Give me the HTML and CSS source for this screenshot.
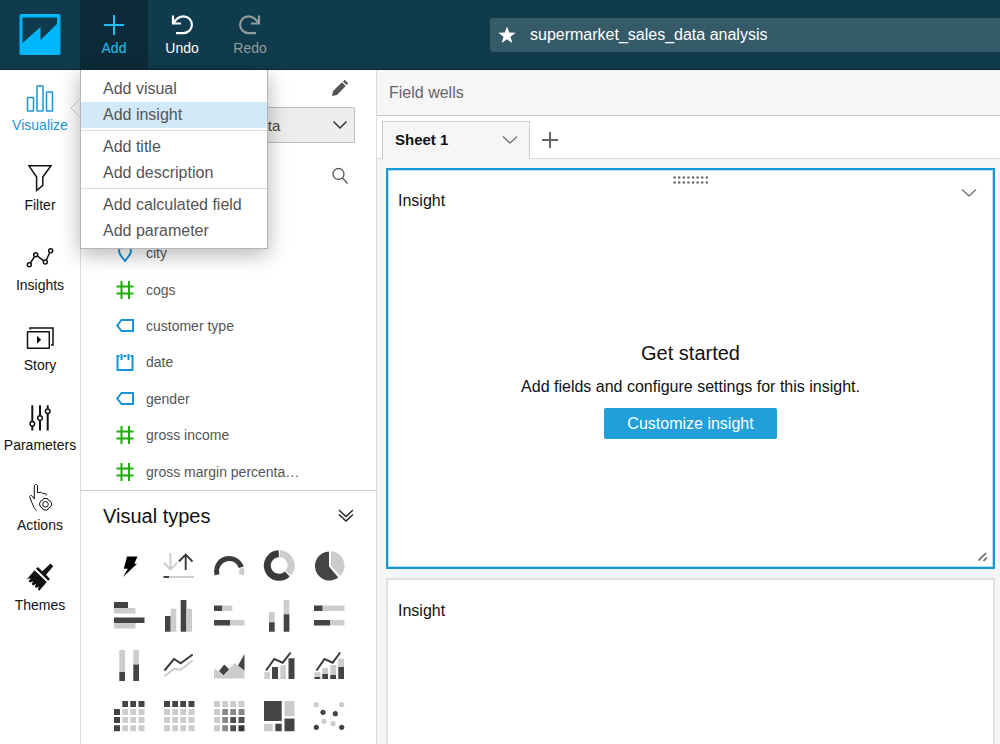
FILE: index.html
```html
<!DOCTYPE html>
<html lang="en">
<head>
  <meta charset="UTF-8">
  <meta name="viewport" content="width=device-width, initial-scale=1">
  <title>supermarket_sales_data analysis</title>
  <link rel="stylesheet" href="styles.css">
</head>
<body>
  <header class="topbar">
    <a class="logo" href="#" aria-label="Home">
      <svg width="42" height="42" viewBox="0 0 42 42"><rect x="0.500" y="0" width="41" height="41" rx="1.500" fill="#00b7fb"/><path d="M3.500 3.500H38V10L21.500 26V13L3.500 29Z" fill="#103b4c"/></svg>
    </a>
    <div class="tools">
      <button class="tool active" type="button">
        <svg width="28" height="28" viewBox="0 0 28 28" fill="none" stroke="currentColor" stroke-width="2"><path d="M14 4v20M4 14h20"/></svg>
        Add
      </button>
      <button class="tool" type="button">
        <svg width="28" height="28" viewBox="0 0 28 28" fill="none" stroke="currentColor" stroke-width="2.200"><path d="M5 4.500v8h8M5.500 12C8 8 11 5.300 15.500 5.300a8.400 8.400 0 0 1 0 16.800H8"/></svg>
        Undo
      </button>
      <button class="tool" type="button" disabled>
        <svg width="28" height="28" viewBox="0 0 28 28" fill="none" stroke="currentColor" stroke-width="2.200"><path d="M23 4.500v8h-8M22.500 12C20 8 17 5.300 12.500 5.300a8.400 8.400 0 0 0 0 16.800H20"/></svg>
        Redo
      </button>
    </div>
    <div class="analysis-name">
      <svg width="18" height="18" viewBox="0 0 18 18"><path d="M9 .5l2.200 6.100 6.400.2-5.100 3.900 1.800 6.300L9 13.300 3.700 17l1.800-6.300L.4 6.800l6.400-.2z" fill="#fff"/></svg>
      <span>supermarket_sales_data analysis</span>
    </div>

    <div class="menu">
      <button type="button">Add visual</button>
      <button type="button" class="selected">Add insight</button>
      <hr>
      <button type="button">Add title</button>
      <button type="button">Add description</button>
      <hr>
      <button type="button">Add calculated field</button>
      <button type="button">Add parameter</button>
    </div>
  </header>

  <div class="layout">
    <nav class="sidenav">
      <a href="#" class="active">
        <svg viewBox="0 0 32 32" fill="none" stroke="currentColor" stroke-width="1.500"><rect x="3.500" y="15.500" width="6" height="13.500" rx=".5"/><rect x="13" y="4" width="6" height="25" rx=".5"/><rect x="22.500" y="10" width="6" height="19" rx=".5"/></svg>
        Visualize
        <svg class="notch" viewBox="0 0 10 20"><path d="M10 1L1 10l9 9" fill="#fff" stroke="#ccc"/></svg>
      </a>
      <a href="#">
        <svg viewBox="0 0 32 32" fill="none" stroke="currentColor" stroke-width="1.500"><path d="M5 3.800h22L18.800 15v8.300L12.600 28.500V15Z"/></svg>
        Filter
      </a>
      <a href="#">
        <svg viewBox="0 0 32 32" fill="none" stroke="currentColor" stroke-width="1.500"><circle cx="5.300" cy="22.700" r="2"/><circle cx="11.700" cy="12.700" r="2"/><circle cx="21.300" cy="20" r="2"/><circle cx="26.700" cy="8.700" r="2"/><path d="M6.400 21l4.200-6.600M13.300 13.900l6.400 4.900M22.200 18.200l3.600-7.700"/></svg>
        Insights
      </a>
      <a href="#">
        <svg viewBox="0 0 32 32" fill="none" stroke="currentColor" stroke-width="1.500"><rect x="3.500" y="9.700" width="21.800" height="16.500" rx=".5"/><path d="M6 7.500V6h23v17h-2"/><path d="M13 13.700l4.200 4-4.200 4z" fill="currentColor" stroke="none"/></svg>
        Story
      </a>
      <a href="#">
        <svg viewBox="0 0 32 32" fill="none" stroke="currentColor" stroke-width="2"><path d="M8.300 3.300v16M8.300 24v4.500M16 3.300v10.500M16 18.500v10M23.700 3.300v3.500M23.700 11.500v17"/><g stroke-width="1.500"><circle cx="8.300" cy="21.700" r="2.300"/><circle cx="16" cy="16" r="2.300"/><circle cx="23.700" cy="9.300" r="2.300"/></g></svg>
        Parameters
      </a>
      <a href="#">
        <svg viewBox="0 0 32 32" fill="none" stroke="currentColor" stroke-width="1"><path d="M12.500 28.500L10 25.500 5.800 15.500c-.5-1.800 1.500-2.800 2.600-1.300L10.300 17V4c0-2 3.200-2 3.200 0v6.500l4-.2 1 1.200 3.200.2.800 1.700"/><path d="M19.500 16.500h4l.8 1.700 2.200 1 1.300 2.800-1.300 3-2.200 1.200-.8 1.800h-4l-.8-1.800-2.200-1.200-1-3 1-2.800 2.200-1z"/><circle cx="21.500" cy="22.300" r="2.800"/></svg>
        Actions
      </a>
      <a href="#">
        <svg viewBox="0 0 32 32" fill="currentColor"><path d="M26.500 1.500l2.700 2.800-7.200 8.400 4 4.300-1.800 1.800L12 6.800 13.800 5l4.500 4.200z"/><path d="M10.500 8.300L22.800 20 15.300 28.700l-1.500-1.500 1.200-2.700-2.800 1.600-1.400-1.400 1.300-2.800-3.100 1.500-1.300-1.400 1.600-2.800-3.300 1.300-1.300-1.300 2.200-3.200-4 1.200z"/></svg>
        Themes
      </a>
    </nav>

    <aside class="panel">
      <div class="dataset">
        <button class="icon-btn" type="button" aria-label="Edit data set">
          <svg width="18" height="18" viewBox="0 0 18 18" fill="#555"><path d="M1 17l1-5L11 3.300l3.700 3.700-8.700 9zM12 2.500L13.700.8l3.500 3.500L15.500 6z"/></svg>
        </button>
        <div class="select-wrap">
          <select aria-label="Data set">
            <option>supermarket_sales_data</option>
          </select>
          <svg class="chevron" width="16" height="10" viewBox="0 0 16 10" fill="none" stroke="#333" stroke-width="1.500"><path d="M1.500 1.500L8 8l6.500-6.500"/></svg>
        </div>
        <button class="icon-btn" type="button" aria-label="Search fields">
          <svg width="18" height="18" viewBox="0 0 18 18" fill="none" stroke="#555" stroke-width="1.300"><circle cx="7.500" cy="7" r="5.500"/><path d="M11.500 11l5 5.500"/></svg>
        </button>
      </div>

      <ul class="fields">
        <li>
          <svg viewBox="0 0 18 18" class="dim"><path d="M9 17C7 13.500 3 11 3 7a6 6 0 0 1 12 0c0 4-4 6.500-6 10z"/></svg>
          city
        </li>
        <li>
          <svg viewBox="0 0 18 18" class="measure"><path d="M5.500 0v18M13 0v18M.5 5.500h17M.5 12.500h17"/></svg>
          cogs
        </li>
        <li>
          <svg viewBox="0 0 18 18" class="dim"><path d="M5.500 3H17v11H5.500L1.200 8.500z"/></svg>
          customer type
        </li>
        <li>
          <svg viewBox="0 0 18 18" class="dim"><path d="M3.500 3h-2v14h15V3h-2M7.500 3h3M5.500 1v6M12.500 1v6"/></svg>
          date
        </li>
        <li>
          <svg viewBox="0 0 18 18" class="dim"><path d="M5.500 3H17v11H5.500L1.200 8.500z"/></svg>
          gender
        </li>
        <li>
          <svg viewBox="0 0 18 18" class="measure"><path d="M5.500 0v18M13 0v18M.5 5.500h17M.5 12.500h17"/></svg>
          gross income
        </li>
        <li>
          <svg viewBox="0 0 18 18" class="measure"><path d="M5.500 0v18M13 0v18M.5 5.500h17M.5 12.500h17"/></svg>
          gross margin percenta…
        </li>
      </ul>

      <section class="visuals">
        <div class="visuals-head">
          <h2>Visual types</h2>
          <button class="icon-btn" type="button" aria-label="Collapse">
            <svg width="16" height="14" viewBox="0 0 16 14" fill="none" stroke="#222" stroke-width="1.400"><path d="M1 1l7 6.500L15 1M1 5.500L8 12l7-6.500"/></svg>
          </button>
        </div>
        <div class="visual-grid">
          <button type="button" aria-label="AutoGraph"><svg viewBox="0 0 32 32"><path d="M14 6.500h10.500L21.300 13.700H24L10 27l4.800-8.300h-4z" fill="#000"/></svg></button>
          <button type="button" aria-label="KPI"><svg viewBox="0 0 32 32" fill="none" stroke-width="1.900"><path class="sl" d="M7.500 3v16M.7 12.500l6.800 6.800 6.800-6.800"/><path class="sd" d="M22.700 20V4.500M15.900 11.500l6.800-6.800 6.800 6.800"/><path class="sl" d="M6 27h25"/><path class="sd" d="M.5 27H6"/></svg></button>
          <button type="button" aria-label="Gauge"><svg viewBox="0 0 32 32" fill="none" stroke-width="5"><path class="sd" d="M4.200 24.800A12.500 12.500 0 0 1 28.300 17.300"/><path class="sl" d="M28.600 18.300a12.500 12.500 0 0 1-.2 6.400"/></svg></button>
          <button type="button" aria-label="Donut chart"><svg viewBox="0 0 32 32" fill="none" stroke-width="7"><path class="sl" d="M16.800 3.700A11.800 11.800 0 0 1 25.200 23.200"/><path class="sd" d="M24.300 24A11.800 11.800 0 1 1 15.800 3.700"/></svg></button>
          <button type="button" aria-label="Pie chart"><svg viewBox="0 0 32 32"><path class="d" d="M16 1.500V16.500l9.300 11A14.500 14.500 0 1 1 16 1.500z"/><path class="l" d="M17.800 1.300A14.500 14.500 0 0 1 27.200 26L17.800 15.500z"/></svg></button>

          <button type="button" aria-label="Horizontal bar chart"><svg viewBox="0 0 32 32"><path class="d" d="M1 2h14v6H1zM1 17.500h30.500V23H1z"/><path class="l" d="M1 8h21.500v5.500H1zM1 23h21.500v5.500H1z"/></svg></button>
          <button type="button" aria-label="Vertical bar chart"><svg viewBox="0 0 32 32"><path class="d" d="M2 16h5.700v15.700H2zM17.700 0h5.700v31.700h-5.700z"/><path class="l" d="M7.700 8.700h5.600v23H7.700zM23.400 8.700H29v23h-5.600z"/></svg></button>
          <button type="button" aria-label="Horizontal stacked bar chart"><svg viewBox="0 0 32 32"><path class="d" d="M1 5.500h8.300V11H1zM1 20h16v5.500H1z"/><path class="l" d="M9.300 5.500h10V11h-10zM17 20h14.500v5.500H17z"/></svg></button>
          <button type="button" aria-label="Vertical stacked bar chart"><svg viewBox="0 0 32 32"><path class="l" d="M6 12h5.700v10.300H6zM20.700 0h5.700v14.300h-5.700z"/><path class="d" d="M6 22.300h5.700v9.400H6zM20.700 14.300h5.700v17.400h-5.700z"/></svg></button>
          <button type="button" aria-label="Horizontal stacked 100% bar chart"><svg viewBox="0 0 32 32"><path class="d" d="M1 5.500h8.700V11H1zM1 20h16v5.500H1z"/><path class="l" d="M9.700 5.500h21.800V11H9.700zM17 20h14.500v5.500H17z"/></svg></button>

          <button type="button" aria-label="Vertical stacked 100% bar chart"><svg viewBox="0 0 32 32"><path class="l" d="M6.300 0H12v22H6.300zM20.300 0H26v14.500h-5.700z"/><path class="d" d="M6.300 22H12v9H6.300zM20.300 14.500H26V31h-5.700z"/></svg></button>
          <button type="button" aria-label="Line chart"><svg viewBox="0 0 32 32" fill="none" stroke-width="2"><path class="sd" d="M1.500 20.500L11 9l6.700 4.300 12-8.800"/><path class="sl" d="M1.500 26.300l9.500-7.600 6.700 1 12-9.200"/></svg></button>
          <button type="button" aria-label="Area line chart"><svg viewBox="0 0 32 32"><path class="l" d="M1 18.700l5 2.800 4.500 4L21.500 13l10 7.500v8H1z"/><path class="d" d="M6 21l5.200-6.500 5 4.800-5.700 6zM25 15.500L31.500 4v16.500z"/></svg></button>
          <button type="button" aria-label="Clustered bar combo chart"><svg viewBox="0 0 32 32"><path class="l" d="M1.300 22.300H7V29H1.300zM17.300 15.300H23V29h-5.700z"/><path class="d" d="M9 17h6v12H9zM25.500 8.300h6V29h-6z"/><path class="sd" d="M3 20.500L11.300 9l8.400 3.700 8-10.200" fill="none" stroke-width="2"/></svg></button>
          <button type="button" aria-label="Stacked bar combo chart"><svg viewBox="0 0 32 32"><path class="l" d="M1.500 22.300h5.800V29H1.500zM9.300 18H15v11H9.300zM17.300 15H23v14h-5.700zM25.300 8.700H31V29h-5.700z"/><path class="d" d="M1.500 27h5.800v2H1.500zM9.300 24H15v5H9.300zM17.300 25H23v4h-5.700zM25.300 17H31v12h-5.700z"/><path class="sd" d="M3.500 20.500L11.500 9l8.200 3.700 7.500-10.200" fill="none" stroke-width="2"/></svg></button>

          <button type="button" aria-label="Pivot table"><svg viewBox="0 0 32 32"><path class="d" d="M9.300 1H15v6H9.300zM17.300 1H23v6h-5.700zM25.500 1h6v6h-6zM1 9h6v6H1zM1 17h6v6H1zM1 25.300h6v6H1z"/><path class="l" d="M9.300 9H15v6H9.300zM17.300 9H23v6h-5.700zM25.500 9h6v6h-6zM9.300 17H15v6H9.300zM17.300 17H23v6h-5.700zM25.500 17h6v6h-6zM9.300 25.300H15v6H9.300zM17.300 25.300H23v6h-5.700zM25.500 25.300h6v6h-6z"/></svg></button>
          <button type="button" aria-label="Table"><svg viewBox="0 0 32 32"><path class="d" d="M1 1h6v6H1zM9.300 1H15v6H9.300zM17.300 1H23v6h-5.700zM25.500 1h6v6h-6z"/><path class="l" d="M1 9h6v6H1zM1 17h6v6H1zM1 25.300h6v6H1zM9.300 9H15v6H9.300zM17.300 9H23v6h-5.700zM25.500 9h6v6h-6zM9.300 17H15v6H9.300zM17.300 17H23v6h-5.700zM25.500 17h6v6h-6zM9.300 25.300H15v6H9.300zM17.300 25.300H23v6h-5.700zM25.500 25.300h6v6h-6z"/></svg></button>
          <button type="button" aria-label="Heat map"><svg viewBox="0 0 32 32"><path class="l" d="M1 1h6v6H1zM9.300 1H15v6H9.300zM17.300 1H23v6h-5.700zM25.500 1h6v6h-6zM1 9h6v6H1zM1 17h6v6H1zM1 25.300h6v6H1z"/><path fill="#888" d="M9.300 9H15v6H9.300zM17.300 9H23v6h-5.700zM25.500 9h6v6h-6zM9.300 17H15v6H9.300zM9.300 25.300H15v6H9.300z"/><path fill="#505050" d="M17.300 17H23v6h-5.700zM25.500 17h6v6h-6zM17.300 25.300H23v6h-5.700z"/><path fill="#333" d="M25.500 25.300h6v6h-6z"/></svg></button>
          <button type="button" aria-label="Tree map"><svg viewBox="0 0 32 32"><path class="d" d="M1 1h17.700v20H1zM12.300 23.700h6.400v7.600h-6.400zM21.500 18.500h10v12.800h-10z"/><path class="l" d="M21.500 1h10v15.300h-10zM1 23.700h8.700v7.600H1z"/></svg></button>
          <button type="button" aria-label="Scatter plot"><svg viewBox="0 0 32 32"><g class="l"><circle cx="3.300" cy="4.700" r="2.600"/><circle cx="28.700" cy="4.700" r="2.600"/><circle cx="11" cy="21.300" r="2.600"/><circle cx="20" cy="23.700" r="2.600"/></g><g class="d"><circle cx="10" cy="12.300" r="2.600"/><circle cx="22.300" cy="13.700" r="2.600"/><circle cx="3.300" cy="27.300" r="2.600"/><circle cx="28.700" cy="27.300" r="2.600"/></g></svg></button>
        </div>
      </section>
    </aside>

    <main class="workspace">
      <div class="wells">Field wells</div>
      <div class="tabs">
        <button class="tab" type="button">
          Sheet 1
          <svg width="16" height="10" viewBox="0 0 16 10" fill="none" stroke="#777" stroke-width="1.400"><path d="M1 1.500l7 6.500 7-6.500"/></svg>
        </button>
        <button class="add-tab" type="button" aria-label="Add sheet">
          <svg width="16" height="16" viewBox="0 0 16 16" fill="none" stroke="#666" stroke-width="2"><path d="M8 0v16M0 8h16"/></svg>
        </button>
      </div>
      <div class="canvas">
        <section class="card selected">
          <svg class="handle" width="36" height="8" viewBox="0 0 36 8" stroke="#555" stroke-width="2" stroke-dasharray="2.200 2.400"><path d="M.5 1.500h35M.5 6.500h35"/></svg>
          <div class="card-head">
            <h3>Insight</h3>
            <button class="icon-btn" type="button" aria-label="Insight options">
              <svg width="16" height="10" viewBox="0 0 16 10" fill="none" stroke="#777" stroke-width="1.400"><path d="M1 1.500l7 6.500 7-6.500"/></svg>
            </button>
          </div>
          <div class="card-body">
            <h2>Get started</h2>
            <p>Add fields and configure settings for this insight.</p>
            <button class="primary" type="button">Customize insight</button>
          </div>
          <svg class="resize" width="12" height="12" viewBox="0 0 12 12" stroke="#666" stroke-width="1.700"><path d="M1.500 9.500L9 2M6.500 10L10 6.500"/></svg>
        </section>
        <section class="card">
          <div class="card-head">
            <h3>Insight</h3>
          </div>
        </section>
      </div>
    </main>
  </div>
</body>
</html>
```

FILE: styles.css
```css
* {
  box-sizing: border-box;
}
body {
  margin: 0;
  height: 100vh;
  display: flex;
  flex-direction: column;
  overflow: hidden;
  font-family: "Liberation Sans", Arial, sans-serif;
  font-size: 16px;
  color: #111;
  background: #fff;
}
h2, h3, p, ul {
  margin: 0;
  padding: 0;
  font-weight: normal;
}
button {
  font-family: inherit;
  border: none;
  background: none;
  padding: 0;
  cursor: pointer;
}
svg {
  display: block;
  flex: none;
}

/* top bar */
.topbar {
  position: relative;
  z-index: 2;
  flex: none;
  height: 70px;
  display: flex;
  align-items: center;
  background: #103b4c;
  border-bottom: 1px solid #08293a;
}
.logo {
  width: 80px;
  display: flex;
  justify-content: center;
}
.tools {
  flex: 1;
  align-self: stretch;
  display: flex;
}
.tool {
  width: 68px;
  display: flex;
  flex-direction: column;
  align-items: center;
  padding-top: 11px;
  font-size: 14px;
  line-height: 18px;
  color: #fff;
}
.tool.active {
  background: #0c2b39;
  color: #1cc0f5;
}
.tool:disabled {
  color: #949b9f;
}
.analysis-name {
  width: 51%;
  height: 34px;
  display: flex;
  align-items: center;
  gap: 14px;
  padding-left: 8px;
  color: #fff;
  background: #355a68;
  border-radius: 3px 0 0 3px;
}

/* add menu */
.menu {
  position: absolute;
  top: 70px;
  left: 80px;
  width: 188px;
  padding: 6px 0 4px;
  background: #fff;
  border: 1px solid #b5b5b5;
  border-top: none;
  box-shadow: 0 5px 20px rgba(0, 0, 0, 0.3);
}
.menu button {
  display: block;
  width: 100%;
  padding-left: 22px;
  font-size: 16px;
  line-height: 26px;
  text-align: left;
  color: #555;
}
.menu .selected {
  background: #d2eaf7;
}
.menu hr {
  margin: 2px 0 3px;
  border: none;
  border-top: 1px solid #ddd;
}

.layout {
  flex: 1;
  min-height: 0;
  display: flex;
}

/* left navigation */
.sidenav {
  flex: none;
  width: 80px;
}
.sidenav a {
  position: relative;
  height: 80px;
  padding-top: 12px;
  display: flex;
  flex-direction: column;
  align-items: center;
  gap: 2px;
  font-size: 14px;
  line-height: 18px;
  color: #111;
  text-decoration: none;
}
.sidenav a.active {
  color: #1a96d4;
}
.sidenav svg {
  width: 32px;
  height: 32px;
}
.sidenav .notch {
  position: absolute;
  right: 0;
  top: 28px;
  width: 10px;
  height: 20px;
}

/* data panel */
.panel {
  flex: none;
  width: 297px;
  display: flex;
  flex-direction: column;
  border-left: 1px solid #ddd;
  border-right: 1px solid #ddd;
}
.dataset {
  display: flex;
  flex-direction: column;
  align-items: flex-end;
  gap: 10px;
  padding: 9px 21px 0 22px;
}
.icon-btn {
  padding: 0 6px;
}
.select-wrap {
  position: relative;
  width: 100%;
  margin-bottom: 14px;
}
.select-wrap select {
  width: 100%;
  height: 36px;
  padding: 0 12px;
  font-family: inherit;
  font-size: 15px;
  color: #444;
  background: #eee;
  border: 1px solid #bbb;
  border-radius: 2px;
  appearance: none;
}
.chevron {
  position: absolute;
  right: 7px;
  top: 13px;
  pointer-events: none;
}
.fields {
  flex: 1;
  padding-top: 50px;
  display: flex;
  flex-direction: column;
  list-style: none;
}
.fields li {
  flex: 1;
  display: flex;
  align-items: center;
  gap: 12px;
  padding-left: 35px;
  font-size: 14px;
  color: #555;
}
.fields svg {
  width: 18px;
  height: 18px;
  fill: none;
  stroke-width: 2;
}
.dim {
  stroke: #1495d8;
}
.measure {
  stroke: #22ab0d;
}

/* visual types */
.visuals {
  flex: none;
  padding: 0 22px 12px;
  border-top: 1px solid #ccc;
}
.visuals-head {
  display: flex;
  align-items: center;
  justify-content: space-between;
  height: 50px;
}
.visuals-head h2 {
  font-size: 20px;
}
.visuals-head .icon-btn {
  padding: 0;
}
.visual-grid {
  display: grid;
  grid-template-columns: repeat(5, 32px);
  gap: 18px;
  padding: 9px 10px 0;
}
.visual-grid svg {
  width: 32px;
  height: 32px;
}
.d {
  fill: #444;
}
.l {
  fill: #ccc;
}
.sd {
  stroke: #3a3a3a;
}
.sl {
  stroke: #ccc;
}

/* workspace */
.workspace {
  flex: 1;
  min-width: 0;
  display: flex;
  flex-direction: column;
  background: #f6f6f6;
}
.wells {
  padding: 0 12px;
  line-height: 45px;
  color: #666;
  border-bottom: 1px solid #c8c8c8;
}
.tabs {
  display: flex;
  align-items: flex-end;
  height: 43px;
  padding-left: 5px;
  background: #fff;
  box-shadow: inset 0 -1px #ddd;
}
.tab {
  width: 148px;
  height: 38px;
  display: flex;
  align-items: center;
  justify-content: space-between;
  padding: 0 11px 2px 12px;
  font-size: 15px;
  font-weight: bold;
  color: #111;
  background: #f6f6f6;
  border: 1px solid #ccc;
  border-bottom: none;
}
.add-tab {
  height: 38px;
  padding: 0 12px;
}
.canvas {
  flex: 1;
  min-height: 0;
  display: flex;
  flex-direction: column;
  gap: 9px;
  padding: 9px 5px 0 9px;
}
.card {
  position: relative;
  flex: 1;
  display: flex;
  flex-direction: column;
  background: #fff;
  border: 2px solid #e0e0e0;
  border-bottom: none;
}
.card.selected {
  flex: none;
  min-height: 401px;
  border: 2px solid #1597d7;
  box-shadow: inset 0 0 0 1px #b9dff2;
}
.handle {
  position: absolute;
  top: 6px;
  left: calc(50% - 18px);
}
.card-head {
  display: flex;
  align-items: flex-start;
  justify-content: space-between;
  padding: 18px 10px 0;
}
.card-head h3 {
  font-size: 16px;
  line-height: 26px;
}
.card-body {
  flex: 1;
  display: flex;
  flex-direction: column;
  align-items: center;
  justify-content: center;
  padding-bottom: 4px;
}
.card-body h2 {
  font-size: 20px;
  line-height: 30px;
}
.card-body p {
  line-height: 18px;
  margin: 10px 0 12px;
}
.primary {
  padding: 0 23px;
  font-size: 16px;
  line-height: 31px;
  color: #fff;
  background: #209fdb;
  border-radius: 2px;
}
.resize {
  position: absolute;
  right: 4px;
  bottom: 4px;
}
```
